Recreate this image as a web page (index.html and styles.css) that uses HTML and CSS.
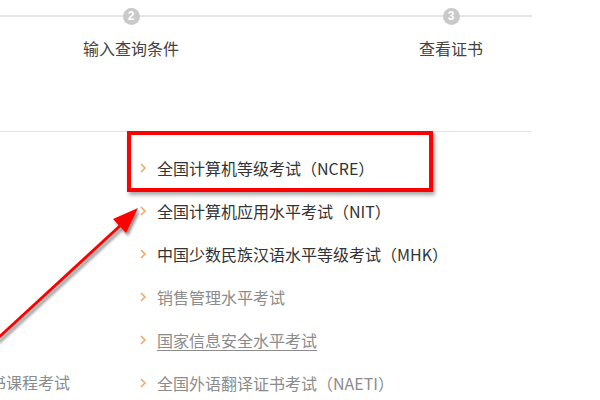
FILE: index.html
```html
<!DOCTYPE html>
<html lang="zh-CN">
<head>
<meta charset="utf-8">
<title>证书查询</title>
<link rel="stylesheet" href="styles.css">
</head>
<body>
<div class="page">
  <div class="steps">
    <div class="step">
      <span class="num">2</span>
      <span class="label">输入查询条件</span>
    </div>
    <div class="step">
      <span class="num">3</span>
      <span class="label">查看证书</span>
    </div>
  </div>
  <div class="lists">
    <ul class="side">
      <li class="side-item">书课程考试</li>
    </ul>
    <ul class="exams">
      <li class="exam dark"><svg class="chev" width="6" height="10" viewBox="0 0 6 10"><polyline points="1,1 5,5 1,9" fill="none" stroke="#f2a45a" stroke-width="1.5"/></svg>全国计算机等级考试（NCRE）</li>
      <li class="exam dark"><svg class="chev" width="6" height="10" viewBox="0 0 6 10"><polyline points="1,1 5,5 1,9" fill="none" stroke="#f2a45a" stroke-width="1.5"/></svg>全国计算机应用水平考试（NIT）</li>
      <li class="exam dark"><svg class="chev" width="6" height="10" viewBox="0 0 6 10"><polyline points="1,1 5,5 1,9" fill="none" stroke="#f2a45a" stroke-width="1.5"/></svg>中国少数民族汉语水平等级考试（MHK）</li>
      <li class="exam"><svg class="chev" width="6" height="10" viewBox="0 0 6 10"><polyline points="1,1 5,5 1,9" fill="none" stroke="#f2a45a" stroke-width="1.5"/></svg>销售管理水平考试</li>
      <li class="exam"><svg class="chev" width="6" height="10" viewBox="0 0 6 10"><polyline points="1,1 5,5 1,9" fill="none" stroke="#f2a45a" stroke-width="1.5"/></svg><span class="hover">国家信息安全水平考试</span></li>
      <li class="exam"><svg class="chev" width="6" height="10" viewBox="0 0 6 10"><polyline points="1,1 5,5 1,9" fill="none" stroke="#f2a45a" stroke-width="1.5"/></svg>全国外语翻译证书考试（NAETI）</li>
    </ul>
  </div>
  <div class="mark-box"></div>
  <svg class="arrow" width="600" height="400" viewBox="0 0 600 400">
    <defs>
      <filter id="sh" x="-20%" y="-20%" width="140%" height="140%">
        <feGaussianBlur in="SourceAlpha" stdDeviation="1.5"/>
        <feOffset dx="2" dy="3" result="b"/>
        <feComponentTransfer><feFuncA type="linear" slope="0.45"/></feComponentTransfer>
        <feMerge><feMergeNode/><feMergeNode in="SourceGraphic"/></feMerge>
      </filter>
    </defs>
    <g filter="url(#sh)">
      <line x1="-4" y1="340" x2="122" y2="224" stroke="#ff0000" stroke-width="3"/>
      <polygon points="138,208 113,219 126,233" fill="#ff0000"/>
    </g>
  </svg>
</div>
</body>
</html>
```

FILE: styles.css
```css
* { box-sizing: border-box; }
html, body { margin: 0; padding: 0; background: #fff; }
body {
  font-family: "Noto Sans CJK SC", "Noto Sans", sans-serif;
  font-size: 16px;
  color: #333;
  width: 600px;
  height: 400px;
  overflow: hidden;
}
.page { position: relative; width: 600px; height: 400px; }

.steps {
  width: 532px;
  height: 132px;
  border-bottom: 1px solid #e4e4e4;
  background: linear-gradient(#e6e6e6, #e6e6e6) no-repeat 0 15px / 532px 2px;
  display: flex;
  padding-left: 71px;
  gap: 200px;
}
.step {
  width: 120px;
  display: flex;
  flex-direction: column;
  align-items: center;
}
.num {
  margin-top: 8px;
  width: 17px;
  height: 17px;
  border-radius: 50%;
  background: #c9c9c9;
  color: #fff;
  font-family: "Liberation Sans", sans-serif;
  font-weight: bold;
  font-size: 12px;
  line-height: 17px;
  text-align: center;
}
.label {
  margin-top: 12px;
  line-height: 22px;
  color: #444;
  font-size: 16px;
}

.lists {
  display: flex;
  padding-top: 14px;
}
ul { list-style: none; margin: 0; padding: 0; }
.side {
  width: 140px;
  display: flex;
  flex-direction: column;
  justify-content: flex-end;
}
.side-item {
  margin-left: -10px;
  line-height: 43px;
  color: #8c8c8c;
  white-space: nowrap;
}
.exam {
  display: flex;
  align-items: center;
  height: 43px;
  color: #8c8c8c;
  white-space: nowrap;
}
.exam.dark { color: #333; }
.chev { margin-right: 11px; flex: none; }
.hover { text-decoration: underline; text-underline-offset: 3px; }

.mark-box {
  position: absolute;
  left: 127px;
  top: 131px;
  width: 306px;
  height: 61px;
  border: 4px solid #ff0000;
  box-shadow: 2px 3px 4px rgba(0,0,0,0.35);
}
.arrow {
  position: absolute;
  left: 0;
  top: 0;
  pointer-events: none;
}
```
